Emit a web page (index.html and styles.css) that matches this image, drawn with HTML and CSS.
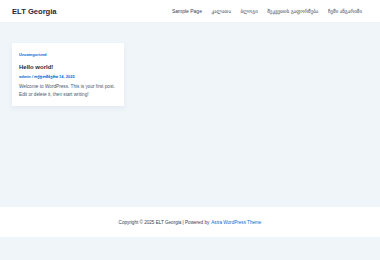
FILE: index.html
```html
<!DOCTYPE html>
<html lang="ka">
<head>
    <meta charset="UTF-8">
    <meta name="viewport" content="width=device-width, initial-scale=1.0">
    <title>ELT Georgia</title>
    <link rel="stylesheet" href="styles.css">
</head>
<body>
    <header class="site-header">
        <div class="site-title">ELT Georgia</div>
        <nav class="main-nav">
            <a href="#">Sample Page</a>
            <a href="#">კალათა</a>
            <a href="#">ბლოგი</a>
            <a href="#">შეკვეთის გაფორმება</a>
            <a href="#">ჩემი ანგარიში</a>
        </nav>
    </header>

    <main class="content">
        <article class="post-card">
            <div class="post-cat">Uncategorized</div>
            <h2 class="post-title">Hello world!</h2>
            <div class="post-meta">admin / ოქტომბერი 14, 2025</div>
            <p class="post-excerpt">Welcome to WordPress. This is your first post. Edit or delete it, then start writing!</p>
        </article>
    </main>

    <footer class="site-footer">
        Copyright © 2025 ELT Georgia | Powered by <a href="#">Astra WordPress Theme</a>
    </footer>
</body>
</html>
```

FILE: styles.css
```css
* {
    margin: 0;
    padding: 0;
    box-sizing: border-box;
}

body {
    font-family: 'Liberation Sans', 'DejaVu Sans', sans-serif;
    background-color: #f0f5fa;
    color: #3a3a3a;
    width: 380px;
    height: 260px;
    overflow: hidden;
}

a {
    text-decoration: none;
    color: inherit;
}

.site-header {
    background: #fff;
    height: 23px;
    display: flex;
    align-items: center;
    justify-content: space-between;
    padding: 0 12px;
    border-bottom: 1px solid #eef1f5;
}

.site-title {
    font-size: 7.6px;
    font-weight: 700;
    color: #1e293b;
}

.main-nav {
    display: flex;
    gap: 9.5px;
    font-size: 5px;
    color: #334155;
    padding-right: 6px;
}

.content {
    height: 184px;
    padding: 20px 12px 0;
}

.post-card {
    width: 112px;
    height: 63px;
    background: #fff;
    padding: 9px 7px 0;
    box-shadow: 0 2px 6px rgba(0, 30, 80, 0.06);
}

.post-cat {
    font-size: 4px;
    font-weight: 700;
    color: #046bd2;
    line-height: 5px;
}

.post-title {
    font-size: 6px;
    font-weight: 700;
    color: #1e293b;
    margin-top: 6px;
    line-height: 8px;
}

.post-meta {
    font-size: 4px;
    font-weight: 700;
    color: #046bd2;
    margin-top: 3px;
    line-height: 6px;
}

.post-excerpt {
    font-size: 4.7px;
    line-height: 8px;
    color: #475569;
    margin-top: 3px;
}

.site-footer {
    background: #fff;
    height: 30px;
    display: flex;
    align-items: center;
    justify-content: center;
    font-size: 4.6px;
    color: #334155;
    gap: 2px;
}

.site-footer a {
    color: #046bd2;
}
```
